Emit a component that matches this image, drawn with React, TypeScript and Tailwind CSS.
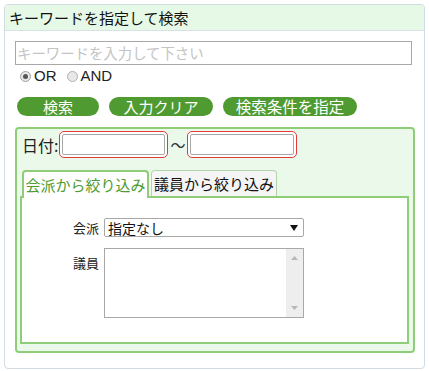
import React from "react";

const jp = { fontFamily: '"Noto Sans CJK JP", "Noto Sans", sans-serif' };

export default function App() {
  return (
    <div className="w-[429px] h-[371px] bg-white pt-[4px] pl-[4px]" style={jp}>
      <div className="w-[421px] h-[365px] border border-[#d0dbe2] rounded-[4px] overflow-hidden">
        <div className="h-[26px] bg-[#e6f8e6] border-b border-[#d6e2e6] pl-[4px] flex items-center">
          <span className="text-[15px] leading-none text-[#111] font-normal">キーワードを指定して検索</span>
        </div>
        <div className="pl-[10px] pt-[10px]">
          <div className="w-[397px] h-[24px] border border-[#a8a8a8] flex items-center pl-[1px]">
            <span className="text-[14.4px] leading-none text-[#c4c4c4]">キーワードを入力して下さい</span>
          </div>
          <div className="flex items-center h-[20px] pl-[5px] mt-[1px] text-[15px] text-[#222]" style={{ fontFamily: '"Liberation Sans", Arial, sans-serif' }}>
            <span className="w-[11px] h-[11px] rounded-full border border-[#a0a0a0] bg-[#e8e8e8] flex items-center justify-center">
              <span className="w-[5px] h-[5px] rounded-full bg-[#555]" />
            </span>
            <span className="ml-[3px]">OR</span>
            <span className="ml-[10px] w-[11px] h-[11px] rounded-full border border-[#b0b0b0] bg-[#e8e8e8]" />
            <span className="ml-[3px]">AND</span>
          </div>
          <div className="flex gap-[10px] mt-[11px] pl-[2px]">
            <div className="w-[82px] h-[19px] rounded-full bg-[#4f9b32] text-white text-[15px] leading-none flex items-center justify-center">検索</div>
            <div className="w-[104px] h-[19px] rounded-full bg-[#4f9b32] text-white text-[15px] leading-none flex items-center justify-center">入力クリア</div>
            <div className="w-[134px] h-[19px] rounded-full bg-[#4f9b32] text-white text-[15.5px] leading-none flex items-center justify-center">検索条件を指定</div>
          </div>
          <div className="mt-[11px] w-[400px] h-[226px] border-[2px] border-[#8fcd78] rounded-[4px] bg-[#ebf9eb] pl-[4px] pt-[2px]">
            <div className="flex items-center h-[27px]">
              <span className="ml-[1px] text-[16px] leading-none text-[#222]">日付:</span>
              <div className="ml-[1px] w-[109px] h-[27px] border-[1.5px] border-[#e03a3a] rounded-[5px] p-[2px] bg-white">
                <div className="w-full h-full border border-[#a8a8a8] rounded-[2px] bg-white" />
              </div>
              <span className="text-[15px] leading-none text-[#333] mx-[2px]">〜</span>
              <div className="w-[110px] h-[27px] border-[1.5px] border-[#e03a3a] rounded-[5px] p-[2px] bg-white">
                <div className="w-full h-full border border-[#a8a8a8] rounded-[2px] bg-white" />
              </div>
            </div>
            <div className="flex mt-[12px] pl-[1px] items-end">
              <div className="w-[127px] h-[28px] bg-white border-[2px] border-b-0 border-[#8fcd78] rounded-t-[4px] flex items-center justify-center text-[15px] leading-none text-[#4f9b32] relative z-10 -mb-[2px] pb-[2px]">
                会派から絞り込み
              </div>
              <div className="ml-[2px] w-[126px] h-[26px] bg-[#f5f5f5] border border-b-0 border-[#b3d4a8] rounded-t-[4px] flex items-center justify-center text-[15px] leading-none text-[#111]">
                議員から絞り込み
              </div>
            </div>
            <div className="w-[389px] h-[148px] bg-white border-[2px] border-[#8fcd78] -ml-[1px] pt-[20px] pl-[51px]">
              <div className="flex items-center">
                <span className="w-[31px] text-[13px] leading-none text-[#222]">会派</span>
                <div className="w-[200px] h-[19px] border border-[#a8a8a8] rounded-[2px] flex items-center justify-between pl-[3px] pr-[5px]">
                  <span className="text-[14px] leading-none text-[#111]">指定なし</span>
                  <svg width="8" height="6" viewBox="0 0 8 6"><path d="M0 0H8L4 6Z" fill="#111" /></svg>
                </div>
              </div>
              <div className="flex mt-[11px]">
                <span className="w-[31px] text-[13px] leading-none text-[#222] pt-[8px]">議員</span>
                <div className="w-[200px] h-[70px] border border-[#a8a8a8] flex justify-end">
                  <div className="w-[17px] h-full bg-[#eeeeee] flex flex-col items-center justify-between py-[7px]">
                    <svg width="7" height="4" viewBox="0 0 7 4"><path d="M0 4H7L3.5 0Z" fill="#b8b8b8" /></svg>
                    <svg width="7" height="4" viewBox="0 0 7 4"><path d="M0 0H7L3.5 4Z" fill="#b8b8b8" /></svg>
                  </div>
                </div>
              </div>
            </div>
          </div>
        </div>
      </div>
    </div>
  );
}
